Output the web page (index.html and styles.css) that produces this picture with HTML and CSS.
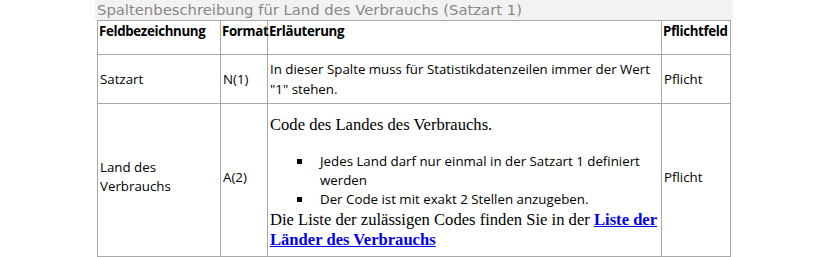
FILE: index.html
```html
<!DOCTYPE html>
<html>
<head>
<meta charset="utf-8">
<link rel="stylesheet" href="styles.css">
</head>
<body>
<div class="wrap">
  <div class="title">Spaltenbeschreibung für Land des Verbrauchs (Satzart 1)</div>
  <table class="spec">
    <colgroup>
      <col class="c1"><col class="c2"><col class="c3"><col class="c4">
    </colgroup>
    <tr class="head">
      <th>Feldbezeichnung</th>
      <th>Format</th>
      <th>Erläuterung</th>
      <th>Pflichtfeld</th>
    </tr>
    <tr class="r1">
      <td>Satzart</td>
      <td>N(1)</td>
      <td>In dieser Spalte muss für Statistikdatenzeilen immer der Wert "1" stehen.</td>
      <td>Pflicht</td>
    </tr>
    <tr class="r2">
      <td>Land des Verbrauchs</td>
      <td>A(2)</td>
      <td class="desc">
        <p class="serif first">Code des Landes des Verbrauchs.</p>
        <ul>
          <li>Jedes Land darf nur einmal in der Satzart 1 definiert werden</li>
          <li>Der Code ist mit exakt 2 Stellen anzugeben.</li>
        </ul>
        <p class="serif">Die Liste der zulässigen Codes finden Sie in der <a href="#">Liste der</a><br><a href="#">Länder des Verbrauchs</a></p>
      </td>
      <td>Pflicht</td>
    </tr>
  </table>
</div>
</body>
</html>
```
FILE: styles.css
```css
html, body { margin: 0; padding: 0; background: #fff; }
.wrap { width: 638px; margin-left: 95px; }
.title {
  background: #f2f2f2;
  color: #888;
  font-family: "DejaVu Sans", sans-serif;
  font-size: 14.8px;
  height: 20px;
  line-height: 20px;
  padding-left: 2px;
  white-space: nowrap;
}
.spec {
  border-collapse: collapse;
  margin-left: 2px;
  width: 633px;
  font-family: "Open Sans", sans-serif;
  font-size: 13.3px;
  color: #000;
  table-layout: fixed;
}
.c1 { width: 123px; } .c2 { width: 47px; } .c3 { width: 394px; } .c4 { width: 69px; }
.spec th, .spec td {
  border: 1px solid #a8a8a8;
  padding: 0 2px;
  text-align: left;
}
.spec th {
  font-weight: bold;
  vertical-align: top;
  height: 33px;
  line-height: 20px;
  white-space: nowrap;
  padding: 0 1px;
  letter-spacing: -0.35px;
}
.r1 td { height: 48px; vertical-align: middle; line-height: 20px; }
.r2 td { height: 146px; vertical-align: middle; line-height: 19px; padding-bottom: 6px; }
.spec td.desc { vertical-align: top; padding-bottom: 0; }
.serif { font-family: "Liberation Serif", serif; font-size: 16.6px; line-height: 20px; margin: 0; }
.serif.first { margin: 11px 0 17px; }
ul { margin: 0 0 1px; padding-left: 50px; list-style: none; }
li { position: relative; line-height: 19px; }
li::before {
  content: "";
  position: absolute;
  left: -23px;
  top: 7px;
  width: 5px;
  height: 5px;
  background: #000;
}
a { color: #0000ee; font-weight: bold; }
```
